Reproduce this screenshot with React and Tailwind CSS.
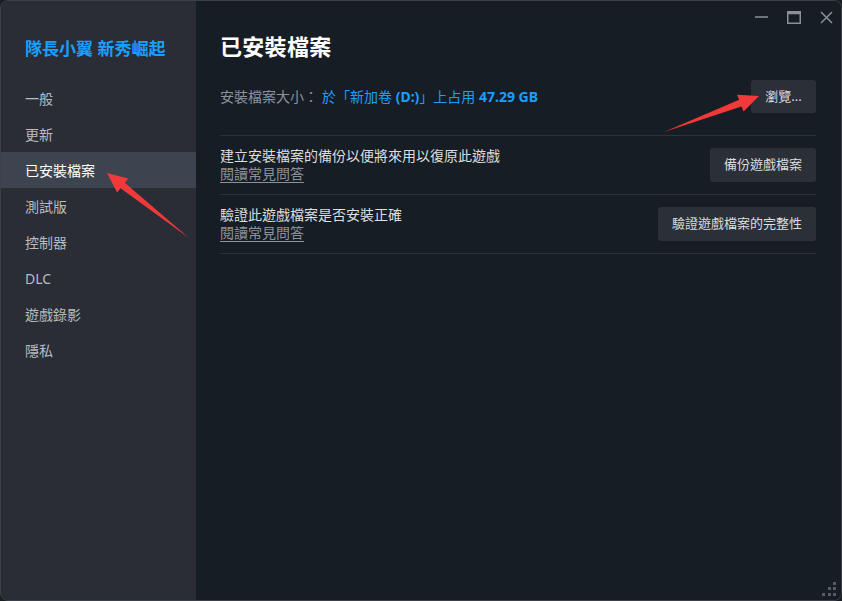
import React from "react";

const FONT = { fontFamily: '"Noto Sans", "Noto Sans CJK TC", sans-serif' };

const MENU = ["一般", "更新", "已安裝檔案", "測試版", "控制器", "DLC", "遊戲錄影", "隱私"];

// tapered red annotation arrow, tail -> tip
function arrowPoints([tx, ty], [hx, hy]) {
    const dx = hx - tx, dy = hy - ty;
    const len = Math.hypot(dx, dy);
    const ux = dx / len, uy = dy / len;
    const nx = -uy, ny = ux;
    const headLen = 20, headW = 9, shaftW = 3.5;
    const bx = hx - ux * headLen, by = hy - uy * headLen;
    const p = (x, y) => `${x.toFixed(1)},${y.toFixed(1)}`;
    return [
        p(tx, ty),
        p(bx + nx * shaftW, by + ny * shaftW),
        p(bx + nx * headW, by + ny * headW),
        p(hx, hy),
        p(bx - nx * headW, by - ny * headW),
        p(bx - nx * shaftW, by - ny * shaftW),
    ].join(" ");
}

function Arrows() {
    return (
        <svg className="absolute inset-0 pointer-events-none" width="842" height="601">
            <polygon points={arrowPoints([189, 238], [107, 173])} fill="#f2393a" />
            <polygon points={arrowPoints([664, 132], [759, 96])} fill="#f2393a" />
        </svg>
    );
}

function WindowControls() {
    return (
        <div className="h-[30px] flex items-start justify-end gap-[19px] pr-[8px] pt-[10px]">
            <svg width="13" height="13" viewBox="0 0 13 13">
                <line x1="0" y1="6" x2="13" y2="6" stroke="#8b9199" strokeWidth="1.5" />
            </svg>
            <svg width="14" height="13" viewBox="0 0 14 13">
                <rect x="0.75" y="0.75" width="12.5" height="11.5" fill="none" stroke="#8b9199" strokeWidth="1.5" />
                <line x1="0" y1="2" x2="14" y2="2" stroke="#8b9199" strokeWidth="2.5" />
            </svg>
            <svg width="13" height="13" viewBox="0 0 13 13">
                <path d="M1 1 L12 12 M12 1 L1 12" stroke="#8b9199" strokeWidth="1.5" />
            </svg>
        </div>
    );
}

function ResizeGrip() {
    const dots = [[11, 0], [6, 5], [11, 5], [0, 11], [6, 11], [11, 11]];
    return (
        <svg className="absolute right-[5px] bottom-[4px]" width="14" height="14">
            {dots.map(([x, y]) => (
                <rect key={`${x}_${y}`} x={x} y={y} width="3" height="3" fill="#555b63" />
            ))}
        </svg>
    );
}

function ActionRow({ title, button }) {
    return (
        <div className="h-[59px] flex items-center justify-between border-b border-[#2c323b]">
            <div className="flex flex-col">
                <span className="text-[14px] leading-[18px] text-[#dcdedf]">{title}</span>
                <span className="text-[14px] leading-[18px] text-[#8b929a] underline underline-offset-[3px]">閱讀常見問答</span>
            </div>
            <button className="h-[34px] px-[14px] rounded-[3px] bg-[#2b2f38] text-[13px] text-[#dcdedf]">
                {button}
            </button>
        </div>
    );
}

export default function App() {
    return (
        <div className="w-[842px] h-[601px] bg-[#1b1e23] relative" style={FONT}>
            <div className="w-full h-full flex rounded-[8px] border border-[#3c4149] overflow-hidden">
                {/* sidebar */}
                <div className="w-[195px] shrink-0 bg-[#2a2d36] flex flex-col">
                    <div className="pt-[36px] pl-[24px] h-[79px] text-[17px] leading-[24px] font-bold text-[#1a9fff]">
                        隊長小翼 新秀崛起
                    </div>
                    {MENU.map((item) => (
                        <div
                            key={item}
                            className={[
                                "h-[36px] flex items-center pl-[24px] text-[14px]",
                                item === "已安裝檔案" ? "bg-[#3d4450] text-white" : "text-[#b8bcbf]",
                            ].join(" ")}
                        >
                            {item}
                        </div>
                    ))}
                </div>

                {/* content */}
                <div className="flex-1 bg-[#171d25] flex flex-col relative">
                    <WindowControls />
                    <div className="pl-[24px] pr-[25px]">
                        <h1 className="text-[22px] leading-[30px] font-bold text-white tracking-[0.3px]">已安裝檔案</h1>

                        <div className="mt-[19px] h-[33px] flex items-center justify-between">
                            <div className="text-[14px]">
                                <span className="text-[#8b929a]">安裝檔案大小：</span>
                                <span className="text-[#1a9fff] ml-[4px]">
                                    於「新加卷 <b>(D:)</b>」上占用 <b>47.29 GB</b>
                                </span>
                            </div>
                            <button className="h-[33px] w-[65px] rounded-[3px] bg-[#2b2f38] text-[13px] text-[#dcdedf]">
                                瀏覽...
                            </button>
                        </div>

                        <div className="mt-[22px] border-t border-[#2c323b]">
                            <ActionRow title="建立安裝檔案的備份以便將來用以復原此遊戲" button="備份遊戲檔案" />
                            <ActionRow title="驗證此遊戲檔案是否安裝正確" button="驗證遊戲檔案的完整性" />
                        </div>
                    </div>
                    <ResizeGrip />
                </div>
            </div>
            <Arrows />
        </div>
    );
}
